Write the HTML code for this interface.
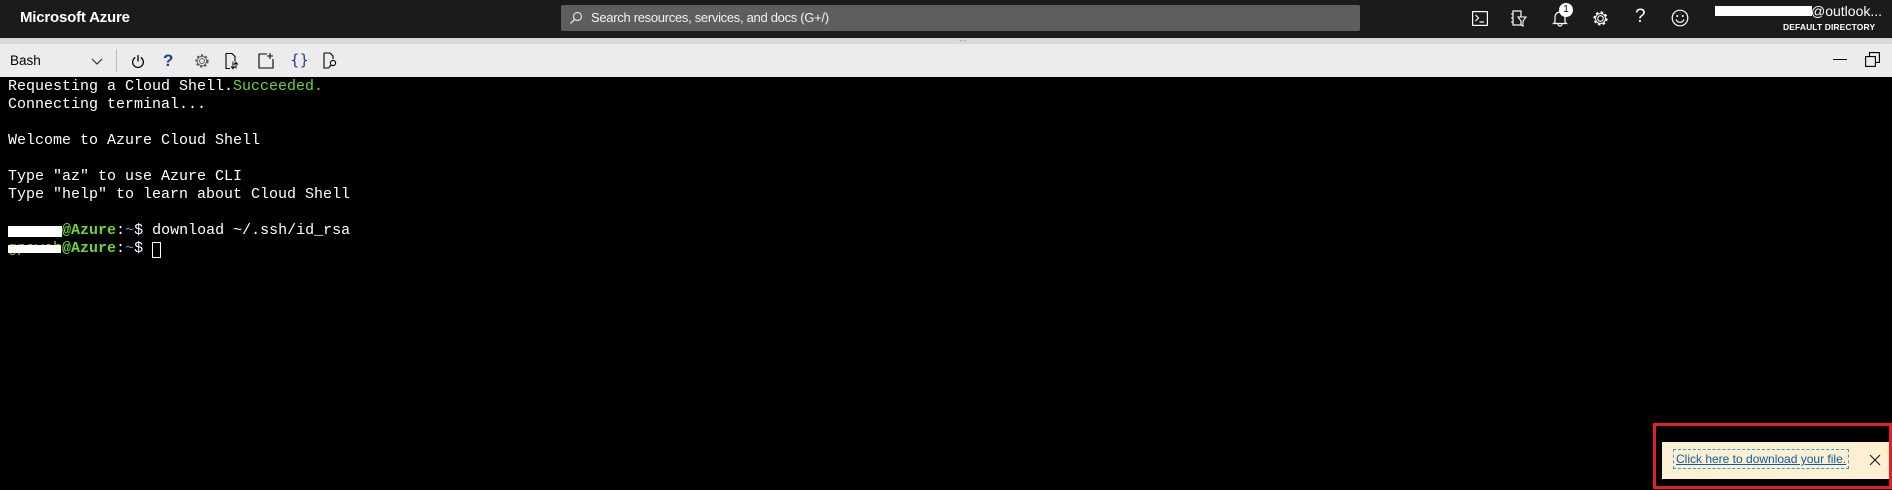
<!DOCTYPE html>
<html><head><meta charset="utf-8">
<style>
*{margin:0;padding:0;box-sizing:border-box}
body{width:1892px;height:490px;overflow:hidden;background:#000;font-family:"Liberation Sans",sans-serif;position:relative}
.top{position:absolute;left:0;top:0;width:1892px;height:38px;background:#1b1b1b}
.brand{position:absolute;left:20px;top:9px;color:#fff;font-size:15px;font-weight:600;letter-spacing:-0.2px}
.search{position:absolute;left:561px;top:5px;width:799px;height:26px;background:#605e5c;border-radius:2px}
.search span{position:absolute;left:30px;top:5px;color:#f3f3f3;font-size:13px;letter-spacing:-0.3px}
.strip{position:absolute;left:0;top:38px;width:1892px;height:6px;background:#d8d8d8}
.tb{position:absolute;left:0;top:44px;width:1892px;height:33px;background:#ececec}
.term{position:absolute;left:0;top:77px;width:1892px;height:413px;background:#000;font-family:"Liberation Mono",monospace;font-size:15px;color:#fff}
.ln{position:absolute;left:8px;white-space:pre;line-height:18px}
.g{color:#6fd630}
.gb{color:#6fd630;font-weight:bold}
.bl{color:#4f9de0}
.ic{position:absolute}
</style></head><body>
<div class="top">
  <div class="brand">Microsoft Azure</div>
  <div class="search">
    <svg class="ic" style="left:8px;top:6px" width="14" height="14" viewBox="0 0 14 14"><circle cx="8.5" cy="5.5" r="4" fill="none" stroke="#ddd" stroke-width="1.2"/><line x1="5.5" y1="8.5" x2="1.5" y2="12.5" stroke="#ddd" stroke-width="1.3"/></svg>
    <span>Search resources, services, and docs (G+/)</span>
  </div>
  <svg class="ic" style="left:1472px;top:11px" width="16" height="15" viewBox="0 0 16 15"><rect x="0.6" y="0.6" width="14.8" height="13.8" fill="none" stroke="#fff" stroke-width="1.2"/><polyline points="3.5,4 6.5,7 3.5,10" fill="none" stroke="#fff" stroke-width="1.2"/><line x1="7.5" y1="11" x2="12" y2="11" stroke="#fff" stroke-width="1.2"/></svg>
  <svg class="ic" style="left:1511px;top:10px" width="16" height="17" viewBox="0 0 16 17"><rect x="2" y="1" width="8" height="14" fill="none" stroke="#fff" stroke-width="1.2"/><line x1="0" y1="4" x2="2" y2="4" stroke="#fff"/><line x1="0" y1="8" x2="2" y2="8" stroke="#fff"/><line x1="0" y1="12" x2="2" y2="12" stroke="#fff"/><path d="M7 7 H15 L12 11 V16 L10 15 V11 Z" fill="#1b1b1b" stroke="#fff" stroke-width="1.1"/></svg>
  <svg class="ic" style="left:1552px;top:10px" width="16" height="17" viewBox="0 0 16 17"><path d="M3 12 V7 a5 5 0 0 1 10 0 V12 L14.5 13.5 H1.5 Z" fill="none" stroke="#fff" stroke-width="1.2"/><path d="M6 14 a2 2 0 0 0 4 0" fill="none" stroke="#fff" stroke-width="1.2"/></svg>
  <div style="position:absolute;left:1559px;top:3px;width:14px;height:14px;border-radius:50%;background:#fff;color:#000;font-size:10px;text-align:center;line-height:14px">1</div>
  <svg class="ic" style="left:1592px;top:10px" width="17" height="17" viewBox="0 0 17 17"><circle cx="8.5" cy="8.5" r="2.8" fill="none" stroke="#fff" stroke-width="1.1"/><circle cx="8.5" cy="8.5" r="6" fill="none" stroke="#fff" stroke-width="2.2" stroke-dasharray="2.4 2.3"/><circle cx="8.5" cy="8.5" r="5" fill="none" stroke="#fff" stroke-width="1"/></svg>
  <div style="position:absolute;left:1635px;top:6px;color:#fff;font-size:19px;font-weight:300">?</div>
  <svg class="ic" style="left:1671px;top:9px" width="18" height="18" viewBox="0 0 18 18"><circle cx="9" cy="9" r="7.8" fill="none" stroke="#fff" stroke-width="1.2"/><circle cx="6.3" cy="7" r="1" fill="#fff"/><circle cx="11.7" cy="7" r="1" fill="#fff"/><path d="M5 10.5 a4.3 4.3 0 0 0 8 0" fill="none" stroke="#fff" stroke-width="1.2"/></svg>
  <div style="position:absolute;left:1715px;top:6px;width:97px;height:10px;background:#fff"></div>
  <div style="position:absolute;left:1811px;top:3px;color:#fff;font-size:14px">@outlook...</div>
  <div style="position:absolute;left:1783px;top:22px;color:#fff;font-size:8.5px;font-weight:bold;letter-spacing:0.1px">DEFAULT DIRECTORY</div>
</div>
<div class="strip"><div style="position:absolute;left:959px;top:0;font-size:8px;color:#777;line-height:6px">···</div></div>
<div class="tb">
  <div style="position:absolute;left:10px;top:9px;font-size:13.5px;color:#000">Bash</div>
  <svg class="ic" style="left:91px;top:14px" width="12" height="8" viewBox="0 0 12 8"><polyline points="1,1 6,6 11,1" fill="none" stroke="#333" stroke-width="1.2"/></svg>
  <div style="position:absolute;left:116px;top:5px;width:1px;height:23px;background:#bbb"></div>
  <svg class="ic" style="left:131px;top:10px" width="14" height="15" viewBox="0 0 13 14"><path d="M4 3.2 a5 5 0 1 0 5 0" fill="none" stroke="#000" stroke-width="1.2"/><line x1="6.5" y1="1" x2="6.5" y2="7" stroke="#000" stroke-width="1.2"/></svg>
  <div style="position:absolute;left:163px;top:7px;font-size:17px;font-weight:bold;color:#1d3d8f">?</div>
  <svg class="ic" style="left:194px;top:9px" width="16" height="16" viewBox="0 0 17 17"><circle cx="8.5" cy="8.5" r="2.6" fill="none" stroke="#555" stroke-width="1"/><circle cx="8.5" cy="8.5" r="6" fill="none" stroke="#555" stroke-width="2" stroke-dasharray="2.3 2.2"/><circle cx="8.5" cy="8.5" r="5" fill="none" stroke="#555" stroke-width="0.9"/></svg>
  <svg class="ic" style="left:225px;top:8px" width="14" height="18" viewBox="0 0 14 17"><path d="M1 1 H7 L10 4 V9 M1 1 V16 H5" fill="none" stroke="#000" stroke-width="1.1"/><line x1="8" y1="9" x2="8" y2="16" stroke="#000"/><polyline points="6,14 8,16 10,14" fill="none" stroke="#000"/><line x1="11" y1="10" x2="11" y2="16" stroke="#000"/><polyline points="9,12 11,10 13,12" fill="none" stroke="#000"/></svg>
  <svg class="ic" style="left:258px;top:8px" width="16" height="17" viewBox="0 0 16 17"><path d="M9 2 H1 V16 H15 V7" fill="none" stroke="#000" stroke-width="1.1"/><line x1="12" y1="1" x2="12" y2="7" stroke="#000"/><line x1="9" y1="4" x2="15" y2="4" stroke="#000"/></svg>
  <div style="position:absolute;left:290px;top:7px;font-size:15px;color:#1d3d8f;font-family:'DejaVu Sans',sans-serif">{}</div>
  <svg class="ic" style="left:323px;top:8px" width="16" height="17" viewBox="0 0 16 17"><path d="M1 1 H7 L10 4 V7 M1 1 V16 H6" fill="none" stroke="#000" stroke-width="1.1"/><circle cx="10" cy="11" r="2.6" fill="none" stroke="#000" stroke-width="1.1"/><line x1="8" y1="13" x2="6" y2="15.5" stroke="#000" stroke-width="1.2"/></svg>
  <div style="position:absolute;left:1833px;top:15px;width:14px;height:1px;background:#000"></div>
  <svg class="ic" style="left:1865px;top:8px" width="15" height="15" viewBox="0 0 15 15"><rect x="0.6" y="4.6" width="9.8" height="9.8" fill="none" stroke="#000" stroke-width="1.1"/><path d="M4.5 4.5 V0.6 H14.4 V10.4 H10.5" fill="none" stroke="#000" stroke-width="1.1"/></svg>
</div>
<div class="term">
  <div class="ln" style="top:1px">Requesting a Cloud Shell.<span class="g">Succeeded.</span></div>
  <div class="ln" style="top:19px">Connecting terminal...</div>
  <div class="ln" style="top:55px">Welcome to Azure Cloud Shell</div>
  <div class="ln" style="top:91px">Type "az" to use Azure CLI</div>
  <div class="ln" style="top:109px">Type "help" to learn about Cloud Shell</div>
  <div class="ln" style="top:145px"><span style="color:#000">gpawsh</span><span class="gb">@Azure</span>:<span class="bl">~</span>$ download ~/.ssh/id_rsa</div>
  <div style="position:absolute;left:8px;top:149px;width:54px;height:11px;background:#fff"></div>
  <div class="ln" style="top:163px"><span class="g">gpawsh</span><span class="gb">@Azure</span>:<span class="bl">~</span>$ </div>
  <div style="position:absolute;left:8px;top:168px;width:53px;height:8px;background:#fff"></div>
  <div style="position:absolute;left:152px;top:165px;width:9px;height:16px;border:1px solid #fff"></div>
</div>
<div style="position:absolute;left:1653px;top:423px;width:239px;height:66px;border:3px solid #e0202a"></div>
<div style="position:absolute;left:1662px;top:442px;width:227px;height:37px;background:#fdf0d2">
  <div style="position:absolute;left:11px;top:7px;border:1px dashed #3a9ad8;padding:2px 2px;font-size:12px;color:#0a5ba8;text-decoration:underline;white-space:nowrap">Click here to download your file.</div>
  <svg class="ic" style="left:207px;top:12px" width="12" height="12" viewBox="0 0 12 12"><path d="M1 1 L11 11 M11 1 L1 11" stroke="#222" stroke-width="1.2"/></svg>
</div>
</body></html>
